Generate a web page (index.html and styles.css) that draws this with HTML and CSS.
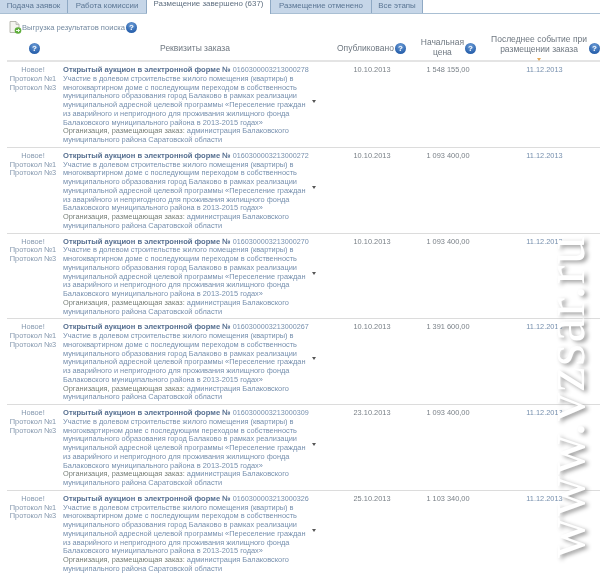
FILE: index.html
```html
<!DOCTYPE html>
<html lang="ru">
<head>
<meta charset="utf-8">
<title>Размещение завершено</title>
<link rel="stylesheet" href="styles.css">
</head>
<body>
<div class="page">
<nav class="tabs">
  <a class="tab w1">Подача заявок</a>
  <a class="tab w2">Работа комиссии</a>
  <a class="tab active w3">Размещение завершено (637)</a>
  <a class="tab w4">Размещение отменено</a>
  <a class="tab w5">Все этапы</a>
</nav>
<div class="export">
  <svg class="doc" viewBox="0 0 14 13" width="14" height="13"><path d="M2 .5h6l3 3v8H2z" fill="#f4f4f0" stroke="#a8a8a0" stroke-width=".8"/><path d="M8 .5v3h3" fill="#ddd" stroke="#a8a8a0" stroke-width=".6"/><circle cx="10" cy="9.5" r="3.3" fill="#5fae3c"/><path d="M8 9.5h3.4M10 8l1.5 1.5L10 11" stroke="#fff" stroke-width=".9" fill="none"/></svg>
  <span class="export-text">Выгрузка результатов поиска</span>
  <span class="q"></span>
</div>
<div class="row head">
  <div class="h1"><span class="q"></span></div>
  <div class="h2">Реквизиты заказа</div>
  <div class="h3">Опубликовано<span class="q"></span></div>
  <div class="h4"><span class="h4t">Начальная<br>цена</span><span class="q"></span></div>
  <div class="h5"><span class="h5t">Последнее событие при<br>размещении заказа<i class="sort"></i></span><span class="q"></span></div>
</div>
<div id="rows"></div>
<div class="mark">www.vzsar.ru</div>
</div>
<template id="tpl">
<div class="row item">
  <div class="links">Новое!<br>Протокол №1<br>Протокол №3</div>
  <div class="info">
    <div class="desc"><b>Открытый аукцион в электронной форме №</b> <span class="num"></span><br>Участие в долевом строительстве жилого помещения (квартиры) в<br>многоквартирном доме с последующим переходом в собственность<br>муниципального образования город Балаково в рамках реализации<br>муниципальной адресной целевой программы «Переселение граждан<br>из аварийного и непригодного для проживания жилищного фонда<br>Балаковского муниципального района в 2013-2015 годах»<br><span class="org">Организация, размещающая заказ:</span> администрация Балаковского<br>муниципального района Саратовской области</div>
    <i class="drop"></i>
  </div>
  <div class="date"></div>
  <div class="price"></div>
  <div class="event">11.12.2013</div>
</div>
</template>
<script src="app.js"></script>
</body>
</html>
```
FILE: app.js
```js
var data = [
  ["0160300003213000278", "10.10.2013", "1 548 155,00"],
  ["0160300003213000272", "10.10.2013", "1 093 400,00"],
  ["0160300003213000270", "10.10.2013", "1 093 400,00"],
  ["0160300003213000267", "10.10.2013", "1 391 600,00"],
  ["0160300003213000309", "23.10.2013", "1 093 400,00"],
  ["0160300003213000326", "25.10.2013", "1 103 340,00"]
];
var tpl = document.getElementById("tpl");
var host = document.getElementById("rows");
data.forEach(function (d) {
  var n = tpl.content.cloneNode(true);
  n.querySelector(".num").textContent = d[0];
  n.querySelector(".date").textContent = d[1];
  n.querySelector(".price").textContent = d[2];
  host.appendChild(n);
});
```
FILE: styles.css
```css
* { box-sizing: border-box; }
html, body { margin: 0; padding: 0; background: #fff; }
body { width: 600px; height: 574px; overflow: hidden; font-family: "Liberation Sans", Arial, sans-serif; font-size: 7.4px; color: #6f7f95; }
.page { position: relative; width: 600px; height: 574px; overflow: hidden; filter: blur(.35px); }
.tabs { display: flex; height: 14px; border-bottom: 1px solid #a9bfd3; }
.tab { display: block; height: 13px; background: #c6d6e8; border-right: 1px solid #8fa9c4; color: #5b7694; text-align: center; line-height: 12px; font-size: 7.9px; }
.tab.active { background: #fff; height: 14px; color: #5f6f80; line-height: 8px; margin-bottom: -1px; }
.w1 { width: 68px; } .w2 { width: 79px; } .w3 { width: 124px; } .w4 { width: 101px; } .w5 { width: 51px; }
.export { display: flex; align-items: center; height: 13px; margin: 7px 0 0 8px; color: #7389a0; font-size: 7.6px; }
.doc { flex: none; }
.q { display: inline-block; flex: none; width: 11px; height: 11px; border-radius: 50%; background: radial-gradient(circle at 50% 30%, #6f9fd8, #2a62ad 70%); color: #fff; position: relative; margin-left: 1px; }
.q::after { content: "?"; position: absolute; left: 0; right: 0; top: 0; text-align: center; font-size: 8px; line-height: 11px; font-weight: bold; }
.row { display: grid; grid-template-columns: 52px 278px 70px 82px 111px; margin-left: 7px; }
.head { height: 28px; border-bottom: 2px solid #e4e4e4; align-items: center; color: #6e7780; font-size: 8.5px; line-height: 10px; text-align: center; }
.h1 { display: flex; justify-content: center; padding-left: 2px; }
.h2 { padding-right: 6px; }
.h3 { display: flex; align-items: center; white-space: nowrap; }
.h4 { display: flex; align-items: center; justify-content: flex-end; padding-right: 13px; }
.h4t { margin: 0 -1px 2px 0; padding-left: 1px; }
.h4 .q { margin-left: 2px; }
.h5 { display: flex; align-items: center; justify-content: flex-end; margin-left: -13px; }
.h5t { position: relative; padding-bottom: 8px; margin-right: 1px; }
.sort { position: absolute; left: 50%; bottom: 1px; margin-left: -2px; width: 0; height: 0; border: 2.5px solid transparent; border-top: 3px solid #e3a75a; border-bottom: 0; }
.item { height: 85.75px; padding-top: 4px; border-bottom: 1px solid #dcdcdc; line-height: 8.75px; }
.links { text-align: center; color: #8598ae; }
.info { display: flex; align-items: center; padding-left: 4px; height: 79px; }
.desc { width: 248px; flex: none; white-space: nowrap; color: #7790ae; }
.desc b { color: #566f90; font-size: 7.6px; }
.num { font-size: 7.2px; }
.org { color: #777f78; }
.drop { flex: none; width: 0; height: 0; margin: 0 0 8px 1px; border: 2.5px solid transparent; border-top: 3px solid #555; border-bottom: 0; }
.date, .price { text-align: center; color: #7a8188; }
.event { text-align: center; color: #7790ae; }
.mark { position: absolute; left: 537px; top: 558px; transform: rotate(-90deg); transform-origin: 0 0; white-space: nowrap; font-family: "Liberation Serif", serif; font-size: 56px; line-height: 56px; letter-spacing: 1.3px; color: #fff; text-shadow: -2px 3px 4px #999; }
```
